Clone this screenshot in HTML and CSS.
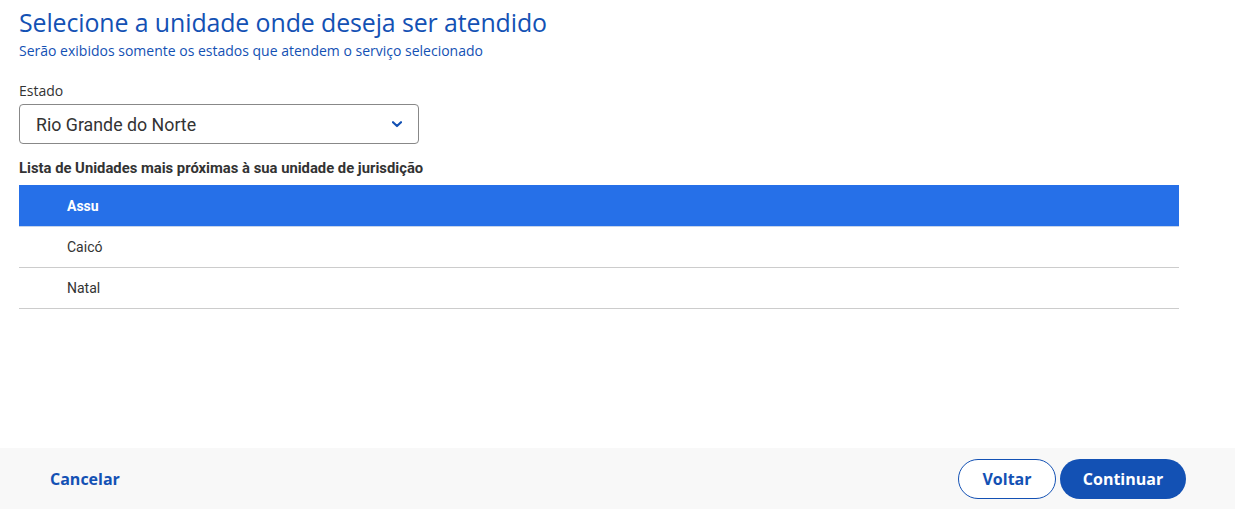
FILE: index.html
```html
<!DOCTYPE html>
<html lang="pt-BR">
<head>
<meta charset="utf-8">
<title>Selecione a unidade</title>
<link rel="stylesheet" href="styles.css">
</head>
<body>
<div class="page">
  <main class="content">
    <h1 class="title">Selecione a unidade onde deseja ser atendido</h1>
    <p class="subtitle">Serão exibidos somente os estados que atendem o serviço selecionado</p>

    <label class="label">Estado</label>
    <div class="select">
      <span class="select-value">Rio Grande do Norte</span>
      <svg class="chevron" width="10" height="7" viewBox="0 0 10 7"><path d="M1 1.2 L5 5 L9 1.2" fill="none" stroke="#1351b4" stroke-width="2.2" stroke-linecap="round" stroke-linejoin="round"/></svg>
    </div>

    <h2 class="list-title">Lista de Unidades mais próximas à sua unidade de jurisdição</h2>
    <ul class="list">
      <li class="item selected">Assu</li>
      <li class="item">Caicó</li>
      <li class="item">Natal</li>
    </ul>
  </main>
  <footer class="footer">
    <a class="cancel">Cancelar</a>
    <div class="actions">
      <button class="btn secondary">Voltar</button>
      <button class="btn primary">Continuar</button>
    </div>
  </footer>
</div>
</body>
</html>
```

FILE: styles.css
```css
html, body {
  margin: 0;
  padding: 0;
  background: #fff;
}
body {
  font-family: "Open Sans", "Liberation Sans", sans-serif;
  color: #333;
}
.page {
  height: 509px;
  display: flex;
  flex-direction: column;
}
.content {
  flex: 1;
  padding: 6px 56px 0 19px;
}
.title {
  margin: 0;
  font-size: 24.9px;
  line-height: 32px;
  font-weight: 500;
  color: #1351b4;
  letter-spacing: -0.1px;
}
.subtitle {
  margin: 3px 0 0;
  font-size: 14px;
  line-height: 20px;
  font-weight: 400;
  color: #1351b4;
}
.label {
  display: block;
  margin-top: 20px;
  font-size: 14px;
  line-height: 20px;
  color: #333;
}
.select {
  box-sizing: border-box;
  width: 400px;
  height: 40px;
  margin-top: 3px;
  border: 1px solid #888;
  border-radius: 4px;
  display: flex;
  align-items: center;
  justify-content: space-between;
  padding: 0 16px 0 16px;
}
.select-value {
  font-family: "Roboto", sans-serif;
  font-size: 17.8px;
  color: #333;
}
.chevron {
  display: block;
}
.list-title {
  margin: 14px 0 0;
  font-family: "Roboto", sans-serif;
  font-size: 14.8px;
  line-height: 20px;
  font-weight: 700;
  color: #333;
}
.list {
  list-style: none;
  margin: 7px 0 0;
  padding: 0;
}
.item {
  height: 40px;
  border-bottom: 1px solid #ccc;
  padding-left: 48px;
  display: flex;
  align-items: center;
  font-family: "Roboto", sans-serif;
  font-size: 14px;
  color: #333;
}
.item.selected {
  height: 41px;
  background: #2670e8;
  color: #fff;
  font-weight: 700;
  border-bottom-color: #c5d4eb;
}
.footer {
  height: 61px;
  background: #f8f8f8;
  display: flex;
  align-items: center;
  justify-content: space-between;
  padding: 0 49px 0 50px;
}
.cancel {
  font-size: 16px;
  font-weight: 700;
  color: #1351b4;
}
.actions {
  display: flex;
  gap: 4px;
}
.btn {
  font-family: "Open Sans", "Liberation Sans", sans-serif;
  height: 40px;
  border-radius: 20px;
  font-size: 16px;
  font-weight: 700;
  cursor: pointer;
}
.btn.secondary {
  width: 98px;
  background: #fff;
  border: 1px solid #1351b4;
  color: #1351b4;
}
.btn.primary {
  width: 126px;
  background: #1351b4;
  border: none;
  color: #fff;
}
```
